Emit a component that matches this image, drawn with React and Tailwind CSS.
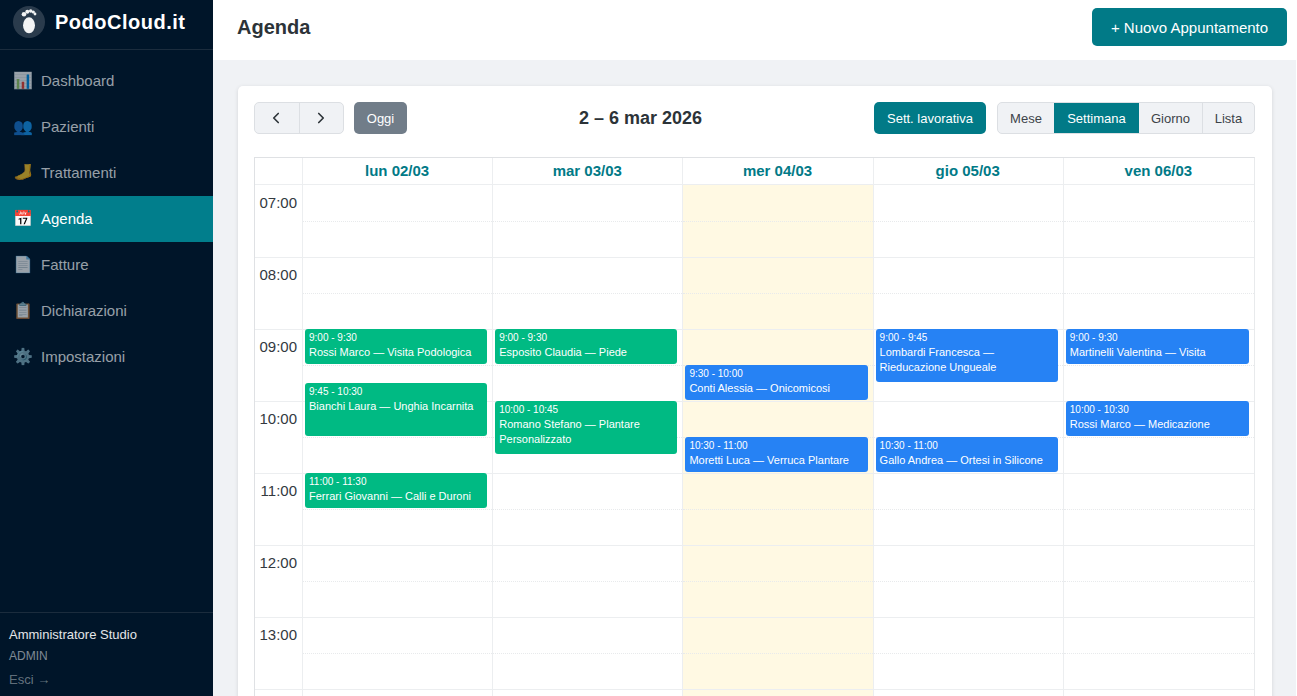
import React from "react";
import { ChevronLeft, ChevronRight } from "lucide-react";

const navItems = [
  { icon: "📊", label: "Dashboard" },
  { icon: "👥", label: "Pazienti" },
  { icon: "🦶", label: "Trattamenti", flip: true },
  { icon: "📅", label: "Agenda", active: true },
  { icon: "📄", label: "Fatture" },
  { icon: "📋", label: "Dichiarazioni" },
  { icon: "⚙️", label: "Impostazioni" },
];

// last row is below the fold, it only shows its top line
const hours = ["07:00", "08:00", "09:00", "10:00", "11:00", "12:00", "13:00", ""];

const days = [
  {
    label: "lun 02/03",
    events: [
      { start: 9, end: 9.5, time: "9:00 - 9:30", title: "Rossi Marco — Visita Podologica", green: true },
      { start: 9.75, end: 10.5, time: "9:45 - 10:30", title: "Bianchi Laura — Unghia Incarnita", green: true },
      { start: 11, end: 11.5, time: "11:00 - 11:30", title: "Ferrari Giovanni — Calli e Duroni", green: true },
    ],
  },
  {
    label: "mar 03/03",
    events: [
      { start: 9, end: 9.5, time: "9:00 - 9:30", title: "Esposito Claudia — Piede", green: true },
      { start: 10, end: 10.75, time: "10:00 - 10:45", title: "Romano Stefano — Plantare Personalizzato", green: true },
    ],
  },
  {
    label: "mer 04/03",
    today: true,
    events: [
      { start: 9.5, end: 10, time: "9:30 - 10:00", title: "Conti Alessia — Onicomicosi" },
      { start: 10.5, end: 11, time: "10:30 - 11:00", title: "Moretti Luca — Verruca Plantare" },
    ],
  },
  {
    label: "gio 05/03",
    events: [
      { start: 9, end: 9.75, time: "9:00 - 9:45", title: "Lombardi Francesca — Rieducazione Ungueale" },
      { start: 10.5, end: 11, time: "10:30 - 11:00", title: "Gallo Andrea — Ortesi in Silicone" },
    ],
  },
  {
    label: "ven 06/03",
    events: [
      { start: 9, end: 9.5, time: "9:00 - 9:30", title: "Martinelli Valentina — Visita" },
      { start: 10, end: 10.5, time: "10:00 - 10:30", title: "Rossi Marco — Medicazione" },
    ],
  },
];

const Sidebar = () => (
  <aside className="w-[213px] shrink-0 h-full bg-[#001529] flex flex-col">
    <div className="h-[50px] shrink-0 border-b border-[#1b2c3d] flex items-center gap-[10px] pl-[13px] pb-[5px]">
      <svg width="32" height="32" viewBox="0 0 32 32" className="shrink-0">
        <circle cx="16" cy="16" r="16" fill="#2a3b4c" />
        <ellipse cx="16" cy="19.3" rx="6" ry="8" fill="#f3f4f4" />
        <circle cx="11" cy="8.3" r="2.3" fill="#f3f4f4" />
        <circle cx="14.3" cy="5.7" r="2" fill="#f3f4f4" />
        <circle cx="17.7" cy="5" r="1.8" fill="#f3f4f4" />
        <circle cx="20.3" cy="6" r="1.6" fill="#f3f4f4" />
        <circle cx="22" cy="8" r="1.4" fill="#f3f4f4" />
      </svg>
      <span className="text-white font-bold text-[20px] tracking-[0.5px]">PodoCloud.it</span>
    </div>
    <nav className="pt-2 flex flex-col">
      {navItems.map((item) => (
        <div
          key={item.label}
          className={
            item.active
              ? "h-[46px] flex items-center pl-[13px] bg-[#017e8c] text-white text-[15px]"
              : "h-[46px] flex items-center pl-[13px] text-white/60 text-[15px]"
          }
        >
          <span className={(item.flip ? "-scale-x-100 " : "") + "w-5 mr-2 text-center text-[16px] leading-none"}>
            {item.icon}
          </span>
          {item.label}
        </div>
      ))}
    </nav>
    <div className="mt-auto border-t border-[#1b2c3d] h-[84px] pt-[13px] pl-[9px]">
      <div className="text-[13px] leading-[17px] text-white/90">Amministratore Studio</div>
      <div className="text-[12px] leading-[14px] mt-[6px] text-white/50">ADMIN</div>
      <div className="text-[13px] leading-[15px] mt-[9px] text-white/40">Esci →</div>
    </div>
  </aside>
);

const Toolbar = () => (
  <div className="flex items-center justify-between h-8 mb-[23px] w-[1001px]">
    <div className="flex items-center">
      <div className="flex h-8 rounded-[5px] border border-[#dcdfe3] bg-[#f0f2f5] text-[#2c3338]">
        <button className="w-[45px] pr-[2px] flex items-center justify-center border-r border-[#dcdfe3]">
          <ChevronLeft size={18} strokeWidth={2.2} />
        </button>
        <button className="w-[43px] pr-[2px] flex items-center justify-center">
          <ChevronRight size={18} strokeWidth={2.2} />
        </button>
      </div>
      <button className="ml-[10px] h-8 w-[53px] pt-px rounded-[5px] bg-[#717d89] text-white text-[13px]">Oggi</button>
    </div>
    <h2 className="text-[18px] font-bold text-[#2c3338]">2 – 6 mar 2026</h2>
    <div className="flex items-center">
      <button className="h-8 w-[112px] pt-px rounded-[5px] bg-[#017a87] text-white text-[13px]">Sett. lavorativa</button>
      <div className="ml-[11px] flex h-8 rounded-[5px] border border-[#dcdfe3] bg-[#f0f2f5] text-[#3d4349] text-[13px] overflow-hidden">
        <span className="w-[56px] pt-px flex items-center justify-center">Mese</span>
        <span className="w-[85px] -my-px pt-px flex items-center justify-center bg-[#017a87] text-white">Settimana</span>
        <span className="w-[64px] pt-px flex items-center justify-center border-r border-[#dcdfe3]">Giorno</span>
        <span className="w-[51px] pt-px flex items-center justify-center">Lista</span>
      </div>
    </div>
  </div>
);

const Event = ({ ev }) => (
  <div
    className={
      (ev.green ? "bg-[#00ba83]" : "bg-[#2682f4]") +
      " absolute left-[2px] right-[5px] rounded-[3px] px-[4px] pt-[2px] text-white overflow-hidden z-10"
    }
    style={{ top: (ev.start - 7) * 72, height: (ev.end - ev.start) * 72 - 1 }}
  >
    <div className="text-[10px] leading-[14px]">{ev.time}</div>
    <div className="text-[11px] leading-[15px]">{ev.title}</div>
  </div>
);

const Calendar = () => (
  <div className="border border-[#dfe1e4] border-r-[#e8eaec] border-b-0 w-[1001px]">
    <div className="grid grid-cols-[48px_repeat(5,1fr)] h-[27px] border-b border-[#eceef0]">
      <div className="border-r border-[#eceef0]" />
      {days.map((d, i) => (
        <div
          key={d.label}
          className={
            i < 4
              ? "border-r border-[#eceef0] pr-px flex items-center justify-center font-bold text-[15px] text-[#017a87]"
              : "pr-px flex items-center justify-center font-bold text-[15px] text-[#017a87]"
          }
        >
          {d.label}
        </div>
      ))}
    </div>
    <div className="grid grid-cols-[48px_repeat(5,1fr)]">
      <div className="border-r border-[#eceef0] pt-px">
        {hours.map((h) => (
          <div key={h} className="h-[72px] border-b border-[#eceef0]">
            <div className="h-[35px] flex items-center justify-end pr-[5px] text-[15px] text-[#33393f]">{h}</div>
          </div>
        ))}
      </div>
      {days.map((d, i) => (
        <div
          key={d.label}
          className={
            (d.today ? "bg-[#fff9e3] " : "") + (i < 4 ? "border-r border-[#eceef0] " : "") + "relative pt-px"
          }
        >
          {hours.map((h) => (
            <div key={h} className="h-[72px] border-b border-[#eceef0] flex flex-col">
              <div className="h-9 border-b border-dotted border-[#e8eaec]" />
            </div>
          ))}
          {d.events.map((ev) => (
            <Event key={ev.time} ev={ev} />
          ))}
        </div>
      ))}
    </div>
  </div>
);

export default function App() {
  return (
    <div className="flex h-screen overflow-hidden bg-white font-['Liberation_Sans',Arial,sans-serif]">
      <Sidebar />
      <div className="flex-1 min-w-0 flex flex-col mr-px bg-[#f0f2f5]">
        <header className="h-[60px] shrink-0 bg-white flex items-start justify-between pl-6 pr-[9px]">
          <h1 className="text-[20px] font-bold text-[#2c3338] mt-3">Agenda</h1>
          <button className="mt-2 h-[38px] pt-[2px] w-[195px] rounded-[5px] bg-[#017a87] text-white text-[15px]">
            + Nuovo Appuntamento
          </button>
        </header>
        <main className="flex-1 min-h-0 overflow-hidden pt-[26px] pl-[25px] pr-[24px]">
          <div className="bg-white rounded-[5px] shadow-[0_1px_4px_rgba(0,0,0,0.12)] p-4">
            <Toolbar />
            <Calendar />
          </div>
        </main>
      </div>
    </div>
  );
}
